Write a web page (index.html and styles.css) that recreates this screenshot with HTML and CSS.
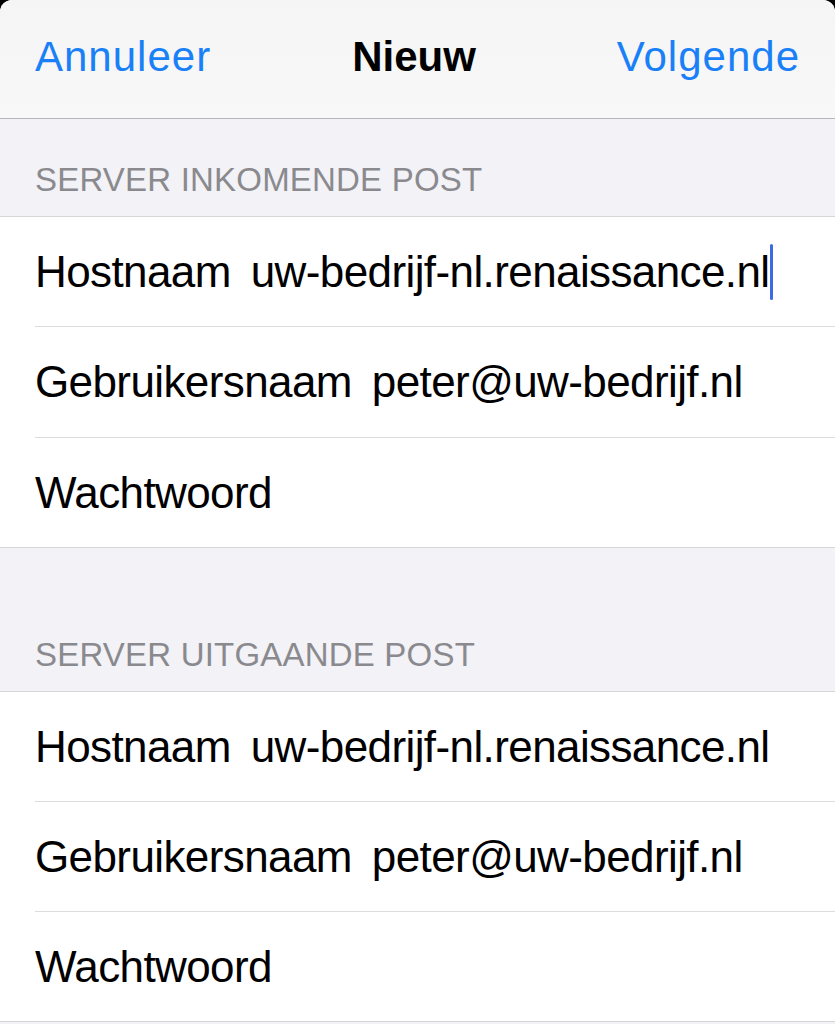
FILE: index.html
```html
<!DOCTYPE html>
<html lang="nl">
<head>
<meta charset="utf-8">
<title>Nieuw</title>
<link rel="stylesheet" href="styles.css">
</head>
<body>
<div class="sheet">
  <header class="nav">
    <span class="nav-btn">Annuleer</span>
    <span class="nav-title">Nieuw</span>
    <span class="nav-btn">Volgende</span>
  </header>

  <div class="section-header first">SERVER INKOMENDE POST</div>
  <div class="group">
    <div class="row"><div class="row-inner"><span class="label">Hostnaam</span><span class="value">uw-bedrijf-nl.renaissance.nl</span><span class="cursor"></span></div></div>
    <div class="row"><div class="row-inner tall"><span class="label">Gebruikersnaam</span><span class="value">peter@uw-bedrijf.nl</span></div></div>
    <div class="row"><div class="row-inner last"><span class="label">Wachtwoord</span></div></div>
  </div>

  <div class="section-header second">SERVER UITGAANDE POST</div>
  <div class="group">
    <div class="row"><div class="row-inner"><span class="label">Hostnaam</span><span class="value">uw-bedrijf-nl.renaissance.nl</span></div></div>
    <div class="row"><div class="row-inner"><span class="label">Gebruikersnaam</span><span class="value">peter@uw-bedrijf.nl</span></div></div>
    <div class="row"><div class="row-inner last"><span class="label">Wachtwoord</span></div></div>
  </div>
</div>
</body>
</html>
```

FILE: styles.css
```css
html, body {
  margin: 0;
  padding: 0;
  background: #000;
  height: 1024px;
  overflow: hidden;
}

.sheet {
  background: #f2f2f7;
  border-radius: 12px 12px 0 0;
  overflow: hidden;
  min-height: 1024px;
  font-family: "Liberation Sans", Arial, sans-serif;
}

.nav {
  height: 119px;
  box-sizing: border-box;
  display: flex;
  align-items: center;
  justify-content: space-between;
  padding: 0 35px 4px 35px;
  background: linear-gradient(#f5f5f5, #f8f8f8);
  border-bottom: 1px solid #b6b6ba;
}

.nav-btn {
  color: #1a80f8;
  font-size: 42px;
  letter-spacing: 1px;
}

.nav-title {
  color: #000;
  font-size: 42px;
  font-weight: bold;
}

.section-header {
  color: #8a8a8e;
  font-size: 33px;
  line-height: 40px;
  padding-left: 35px;
  letter-spacing: 0.2px;
}

.section-header.first {
  padding-top: 41px;
  padding-bottom: 16px;
}

.section-header.second {
  padding-top: 87px;
  padding-bottom: 16px;
}

.group {
  background: #fff;
  border-top: 1px solid #d6d6da;
  border-bottom: 1px solid #d6d6da;
}

.row {
  padding-left: 35px;
}

.row-inner {
  height: 109px;
  display: flex;
  align-items: center;
  gap: 20px;
  border-bottom: 1px solid #dcdcde;
  font-size: 44px;
  letter-spacing: -0.6px;
  color: #000;
}

.row-inner.tall {
  height: 110px;
}

.row-inner.last {
  border-bottom: none;
  height: 109px;
}

.cursor {
  width: 3px;
  height: 56px;
  margin-left: -20px;
  background: #3f6ae6;
  border-radius: 2px;
}
```
